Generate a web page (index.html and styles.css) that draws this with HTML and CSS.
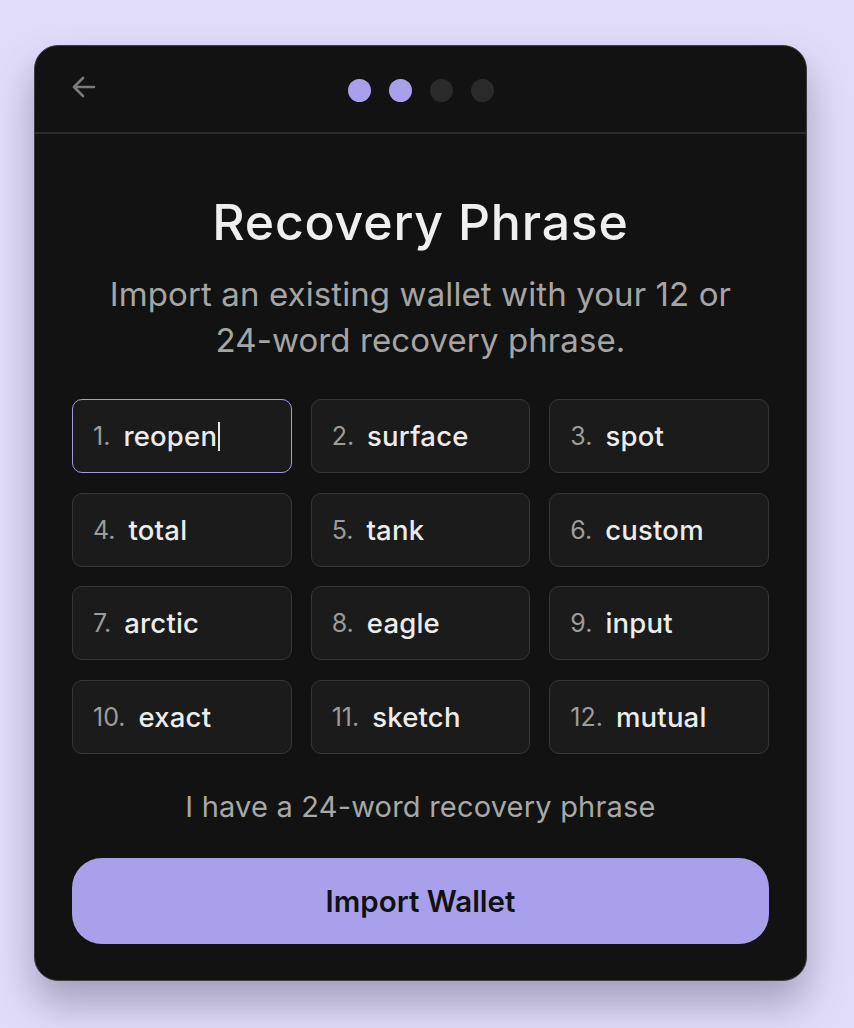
FILE: index.html
```html
<!DOCTYPE html>
<html lang="en">
<head>
<meta charset="utf-8">
<title>Recovery Phrase</title>
<link rel="stylesheet" href="styles.css">
</head>
<body>
<div class="card">
  <header class="top">
    <button class="back" aria-label="Back">
      <svg width="28" height="28" viewBox="0 0 28 28" fill="none" stroke="#7a7a7a" stroke-width="2.6" stroke-linecap="round" stroke-linejoin="round"><path d="M24 14H4M13 5l-9 9 9 9"/></svg>
    </button>
    <div class="dots">
      <span class="dot on"></span><span class="dot on"></span><span class="dot"></span><span class="dot"></span>
    </div>
  </header>
  <main class="body">
    <h1 class="title">Recovery Phrase</h1>
    <p class="sub">Import an existing wallet with your 12 or 24-word recovery phrase.</p>
    <div class="grid">
      <div class="cell active"><span class="n">1.</span><span class="w">reopen<span class="caret"></span></span></div>
      <div class="cell"><span class="n">2.</span><span class="w">surface</span></div>
      <div class="cell"><span class="n">3.</span><span class="w">spot</span></div>
      <div class="cell"><span class="n">4.</span><span class="w">total</span></div>
      <div class="cell"><span class="n">5.</span><span class="w">tank</span></div>
      <div class="cell"><span class="n">6.</span><span class="w">custom</span></div>
      <div class="cell"><span class="n">7.</span><span class="w">arctic</span></div>
      <div class="cell"><span class="n">8.</span><span class="w">eagle</span></div>
      <div class="cell"><span class="n">9.</span><span class="w">input</span></div>
      <div class="cell"><span class="n">10.</span><span class="w">exact</span></div>
      <div class="cell"><span class="n">11.</span><span class="w">sketch</span></div>
      <div class="cell"><span class="n">12.</span><span class="w">mutual</span></div>
    </div>
    <p class="alt">I have a 24-word recovery phrase</p>
    <button class="cta">Import Wallet</button>
  </main>
</div>
</body>
</html>
```
FILE: styles.css
```css
* { box-sizing: border-box; }
html, body { margin: 0; padding: 0; }
body {
  background: #e1ddf9;
  font-family: Inter, "Noto Sans", sans-serif;
  padding: 45px 47px 0 34px;
  min-height: 1028px;
}
.card {
  width: 773px;
  height: 936px;
  background: #121212;
  border: 1.5px solid #3e3e3e;
  border-radius: 24px;
  box-shadow: 0 22px 40px rgba(40, 36, 70, 0.35);
  display: flex;
  flex-direction: column;
  overflow: hidden;
}
.top {
  height: 88px;
  border-bottom: 2px solid #2c2c2c;
  display: flex;
  align-items: center;
  position: relative;
  padding-left: 34px;
}
.back {
  background: none;
  border: 0;
  padding: 0;
  width: 30px;
  height: 30px;
  display: flex;
  align-items: center;
  justify-content: center;
  margin-top: -5px;
}
.dots {
  position: absolute;
  left: 313px;
  top: 33px;
  display: flex;
  gap: 18px;
}
.dot {
  width: 23px;
  height: 23px;
  border-radius: 50%;
  background: #2a2a2a;
}
.dot.on { background: #a9a0ec; }
.body {
  padding: 0 37px;
  display: flex;
  flex-direction: column;
  align-items: stretch;
}
.title {
  margin: 60px 0 0;
  text-align: center;
  color: #efefef;
  font-weight: 500;
  font-size: 50px;
  line-height: 56px;
  letter-spacing: 0.8px;
}
.sub {
  margin: 21px auto 0;
  max-width: 650px;
  text-align: center;
  color: #a5a5a5;
  font-size: 33px;
  line-height: 46px;
  font-weight: 400;
  letter-spacing: 0.1px;
}
.grid {
  margin-top: 36px;
  display: grid;
  grid-template-columns: repeat(3, 1fr);
  column-gap: 19px;
  row-gap: 19.5px;
}
.cell {
  height: 74px;
  background: #1b1b1b;
  border: 1.5px solid #363636;
  border-radius: 10px;
  display: flex;
  align-items: center;
  padding-left: 20px;
  gap: 13px;
}
.cell.active { border-color: #a49be6; }
.n {
  color: #9c9c9c;
  font-size: 25px;
}
.w {
  color: #ececec;
  font-size: 27.5px;
  font-weight: 500;
  letter-spacing: 0.2px;
  display: flex;
  align-items: center;
}
.caret {
  display: inline-block;
  width: 2px;
  height: 29px;
  background: #e6e6e6;
  margin-left: 1px;
}
.alt {
  margin: 36px 0 0;
  text-align: center;
  color: #a8a8a8;
  font-size: 29px;
  line-height: 34px;
  letter-spacing: 0.2px;
}
.cta {
  margin-top: 34px;
  height: 86px;
  border: 0;
  border-radius: 30px;
  background: #a8a0ea;
  color: #111;
  font-family: Inter, "Noto Sans", sans-serif;
  font-size: 29.5px;
  font-weight: 600;
}
```
